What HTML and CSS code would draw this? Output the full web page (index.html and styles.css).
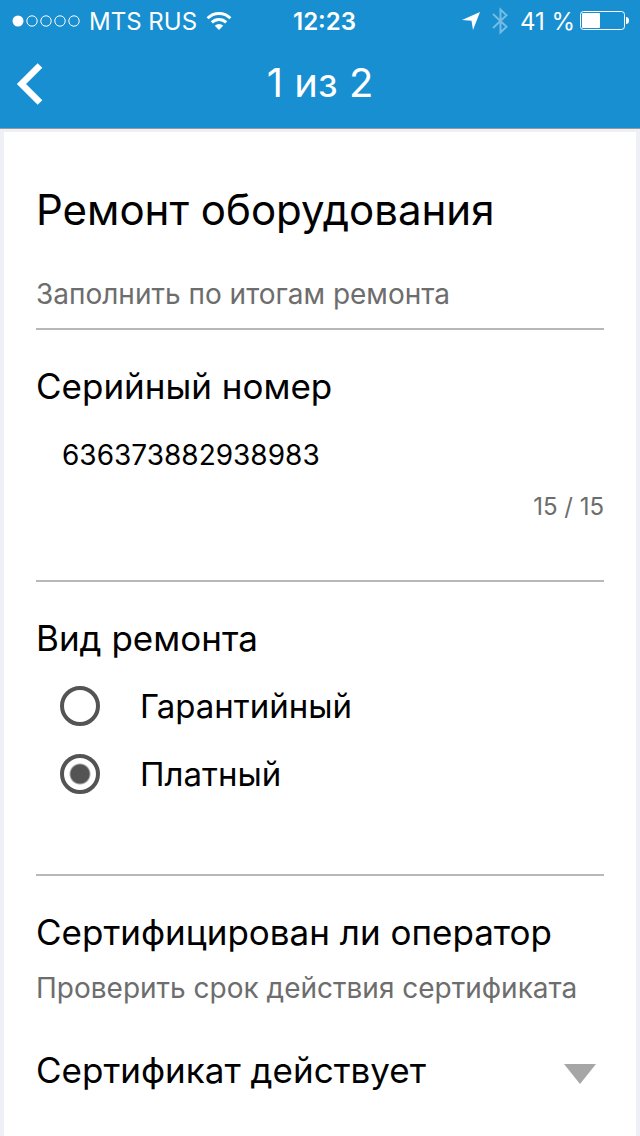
FILE: index.html
```html
<!DOCTYPE html>
<html lang="ru">
<head>
  <meta charset="UTF-8">
  <meta name="viewport" content="width=device-width, initial-scale=1.0">
  <title>Ремонт оборудования</title>
  <link rel="stylesheet" href="styles.css">
</head>
<body>
  <header class="header">
    <div class="status-bar">
      <div class="status-left">
        <svg class="signal" width="68" height="12" viewBox="0 0 68 12" fill="none" stroke="#fff">
          <circle cx="6" cy="6" r="5.5" fill="#fff" stroke="none"/>
          <circle cx="20" cy="6" r="5.2"/>
          <circle cx="34" cy="6" r="5.2"/>
          <circle cx="48" cy="6" r="5.2"/>
          <circle cx="62" cy="6" r="5.2"/>
        </svg>
        <span>MTS RUS</span>
        <svg width="26" height="20" viewBox="0 0 26 20" fill="none" stroke="#fff" stroke-width="3">
          <path d="M1.6 7.2a16.2 16.2 0 0 1 22.8 0"/>
          <path d="M5.8 11.4a10.2 10.2 0 0 1 14.4 0"/>
          <path d="M13 19l-4.2-4.3a6 6 0 0 1 8.4 0z" fill="#fff" stroke="none"/>
        </svg>
      </div>
      <time class="clock">12:23</time>
      <div class="status-right">
        <svg width="18" height="18" viewBox="0 0 18 18" fill="#fff">
          <path d="M18 0L11 18 9.5 8.8 0 8z"/>
        </svg>
        <svg class="bluetooth" width="16" height="28" viewBox="0 0 16 28" fill="none" stroke="#fff" stroke-width="2">
          <path d="M1 7L14.5 19.8 8.5 25.5V2.5L14.5 8.2 1 21"/>
        </svg>
        <div class="battery">
          <span>41 %</span>
          <svg width="49" height="20" viewBox="0 0 49 20">
            <rect x=".5" y=".5" width="44" height="18" rx="3" fill="none" stroke="#fff"/>
            <rect x="2" y="2" width="18" height="15" rx="1" fill="#fff"/>
            <path d="M46 6q3 0 3 3.5t-3 3.5z" fill="#fff"/>
          </svg>
        </div>
      </div>
    </div>
    <nav class="nav-bar">
      <button type="button" class="back" aria-label="Назад">
        <svg width="28" height="44" viewBox="0 0 28 44" fill="none" stroke="#fff" stroke-width="6.6">
          <path d="M24 3.5L5.5 22 24 40.5"/>
        </svg>
      </button>
      <span class="page">1 из 2</span>
    </nav>
  </header>

  <form class="card">
    <div class="intro">
      <h1>Ремонт оборудования</h1>
      <p class="hint">Заполнить по итогам ремонта</p>
    </div>

    <div class="section">
      <label class="title" for="serial">Серийный номер</label>
      <input class="serial" type="text" id="serial" maxlength="15" inputmode="numeric" value="636373882938983">
      <div class="counter">15 / 15</div>
    </div>

    <fieldset class="section">
      <legend class="title">Вид ремонта</legend>
      <div class="options">
        <label class="option">
          <input type="radio" name="repair" value="warranty">
          Гарантийный
        </label>
        <label class="option">
          <input type="radio" name="repair" value="paid" checked>
          Платный
        </label>
      </div>
    </fieldset>

    <div class="section">
      <label class="title" for="certificate">Сертифицирован ли оператор</label>
      <p class="hint">Проверить срок действия сертификата</p>
      <div class="dropdown">
        <select id="certificate">
          <option>Сертификат действует</option>
        </select>
        <svg class="arrow" width="32" height="20" viewBox="0 0 32 20" fill="#a6a6a6">
          <path d="M0 0h32L16 20z"/>
        </svg>
      </div>
    </div>
  </form>
</body>
</html>
```
FILE: styles.css
```css
* {
  box-sizing: border-box;
}

body {
  display: flex;
  flex-direction: column;
  min-height: 100vh;
  margin: 0;
  background-color: #efeff6;
  color: #000;
  font-family: Inter, "Noto Sans", sans-serif;
}

.header {
  background-color: #188fd0;
  border-bottom: 1px solid #999;
  color: #fff;
}

.status-bar {
  display: grid;
  grid-template-columns: 1fr auto 1fr;
  align-items: center;
  height: 40px;
  padding: 2px 11px 0 12px;
  font-size: 24px;
}

.status-left {
  display: flex;
  align-items: center;
  gap: 9px;
}

.status-right {
  display: flex;
  align-items: center;
  justify-content: flex-end;
  gap: 12px;
}

.battery {
  display: flex;
  align-items: center;
  gap: 5px;
}

.clock {
  padding-left: 8px;
  font-weight: 600;
}

.bluetooth {
  opacity: 0.4;
}

.nav-bar {
  display: grid;
  grid-template-columns: 1fr auto 1fr;
  align-items: center;
  height: 88px;
  padding: 0 16px;
}

.back {
  justify-self: start;
  display: flex;
  padding: 0;
  border: none;
  background: none;
  cursor: pointer;
}

.page {
  padding-bottom: 4px;
  font-size: 40px;
}

.card {
  flex: 1;
  margin: 3px 4px 0;
  padding: 52px 32px 0;
  background-color: #fff;
}

h1,
p {
  margin: 0;
}

h1 {
  font-size: 42px;
  font-weight: 400;
  line-height: 52px;
}

.hint {
  color: #6d6d6d;
  font-size: 28px;
  line-height: 36px;
}

.intro .hint {
  margin-top: 40px;
  padding-bottom: 16px;
}

.section {
  display: flow-root;
  min-width: 0;
  margin: 0;
  padding: 34px 0 0;
  border: none;
  border-top: 2px solid #b8b8b8;
}

.title {
  display: block;
  float: left;
  width: 100%;
  padding: 0 0 12px;
  font-size: 35px;
  line-height: 44px;
}

.title + * {
  clear: both;
}

.serial {
  display: block;
  width: 100%;
  height: 70px;
  margin: 0;
  padding: 0 26px;
  border: none;
  background: none;
  font: inherit;
  font-size: 28px;
}

.counter {
  padding: 1px 0 57px;
  color: #6d6d6d;
  font-size: 24px;
  line-height: 32px;
  text-align: right;
}

.options {
  padding-bottom: 66px;
}

.option {
  display: flex;
  align-items: center;
  gap: 40px;
  height: 68px;
  padding-left: 24px;
  font-size: 33px;
}

.option input {
  appearance: none;
  width: 40px;
  height: 40px;
  margin: 0;
  border: 4px solid #545454;
  border-radius: 50%;
}

.option input:checked {
  background: radial-gradient(circle, #545454 9px, transparent 11px);
}

.section .hint {
  padding-top: 4px;
}

.dropdown {
  display: grid;
  align-items: center;
  margin-top: 36px;
  padding-bottom: 32px;
}

.dropdown select,
.arrow {
  grid-area: 1 / 1;
}

.dropdown select {
  appearance: none;
  width: 100%;
  height: 56px;
  padding: 0;
  border: none;
  background: none;
  color: inherit;
  font: inherit;
  font-size: 35px;
}

.arrow {
  justify-self: end;
  margin: 8px 8px 0 0;
  pointer-events: none;
}
```
